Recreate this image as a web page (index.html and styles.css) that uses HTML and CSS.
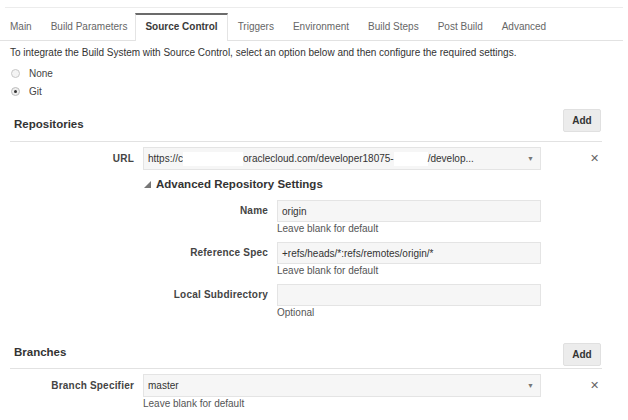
FILE: index.html
```html
<!DOCTYPE html>
<html>
<head>
<meta charset="utf-8">
<link rel="stylesheet" href="styles.css">
</head>
<body>
<div class="page">
  <div class="tabbar">
    <ul class="tabs">
      <li class="tab">Main</li>
      <li class="tab">Build Parameters</li>
      <li class="tab active">Source Control</li>
      <li class="tab">Triggers</li>
      <li class="tab">Environment</li>
      <li class="tab">Build Steps</li>
      <li class="tab">Post Build</li>
      <li class="tab">Advanced</li>
    </ul>
  </div>

  <p class="intro">To integrate the Build System with Source Control, select an option below and then configure the required settings.</p>

  <div class="radios">
    <label class="radio"><span class="dot"></span>None</label>
    <label class="radio"><span class="dot checked"></span>Git</label>
  </div>

  <section class="section repos">
    <div class="sec-head">
      <h2 class="sec-title">Repositories</h2>
      <button class="add">Add</button>
    </div>
    <div class="form-row">
      <span class="label">URL</span>
      <div class="field select">
        <span class="val">https://c<span class="redact w60"></span>oraclecloud.com/developer18075-<span class="redact w34"></span>/develop...</span>
        <span class="caret">&#9660;</span>
      </div>
      <span class="remove">&#10005;</span>
    </div>
    <div class="adv">
      <div class="adv-title"><span class="tri"></span>Advanced Repository Settings</div>
      <div class="adv-row">
        <span class="label">Name</span>
        <div class="stack">
          <div class="field"><span class="val">origin</span></div>
          <div class="hint">Leave blank for default</div>
        </div>
      </div>
      <div class="adv-row">
        <span class="label">Reference Spec</span>
        <div class="stack">
          <div class="field"><span class="val">+refs/heads/*:refs/remotes/origin/*</span></div>
          <div class="hint">Leave blank for default</div>
        </div>
      </div>
      <div class="adv-row">
        <span class="label">Local Subdirectory</span>
        <div class="stack">
          <div class="field"><span class="val"></span></div>
          <div class="hint">Optional</div>
        </div>
      </div>
    </div>
  </section>

  <section class="section branches">
    <div class="sec-head">
      <h2 class="sec-title">Branches</h2>
      <button class="add">Add</button>
    </div>
    <div class="form-row">
      <span class="label">Branch Specifier</span>
      <div class="stack">
        <div class="field select">
          <span class="val">master</span>
          <span class="caret">&#9660;</span>
        </div>
        <div class="hint">Leave blank for default</div>
      </div>
      <span class="remove">&#10005;</span>
    </div>
  </section>
</div>
</body>
</html>
```

FILE: styles.css
```css
* { box-sizing: border-box; }
html, body { margin: 0; padding: 0; background: #fff; }
body {
  font-family: "Liberation Sans", Arial, sans-serif;
  font-size: 10px;
  color: #333;
  width: 628px;
  height: 420px;
  overflow: hidden;
}
.page { padding-top: 7px; }

.tabbar {
  margin: 0 5px;
  border-top: 1px solid #ececec;
  padding-top: 5px;
}
.tabs {
  list-style: none;
  margin: 0 0 0 -5px;
  padding: 0;
  display: flex;
  border-bottom: 1px solid #e2e2e2;
  width: 623px;
}
.tab {
  height: 27px;
  line-height: 27px;
  padding: 0 9px 0 10px;
  color: #666;
  white-space: nowrap;
}
.tab.active {
  border-top: 2px solid #6b6b6b;
  border-left: 1px solid #e4e4e4;
  border-right: 1px solid #e4e4e4;
  background: #fff;
  margin-bottom: -1px;
  margin-left: -1px;
  height: 28px;
  line-height: 24px;
  font-weight: bold;
  color: #3a3a3a;
  padding: 0 9px;
}

.intro {
  margin: 4px 0 0 10px;
  line-height: 16px;
}

.radios { margin: 3px 0 0 11px; display: flex; flex-direction: column; }
.radio {
  height: 18px;
  display: flex;
  align-items: center;
  gap: 9px;
  color: #444;
}
.dot {
  width: 9px; height: 9px;
  border-radius: 50%;
  border: 1px solid #c8c8c8;
  background: #f4f4f4;
  position: relative;
}
.dot.checked { border-color: #bdbdbd; background: #eee; }
.dot.checked::after {
  content: "";
  position: absolute;
  left: 2px; top: 2px;
  width: 3px; height: 3px;
  border-radius: 50%;
  background: #333;
}

.section { margin: 0 26px 0 10px; }
.repos { margin-top: 9px; }
.branches { margin-top: 23px; }

.sec-head {
  display: flex;
  justify-content: space-between;
  align-items: flex-start;
  padding-left: 4px;
  border-bottom: 1px solid #e2e2e2;
}
.repos .sec-head { height: 33px; }
.branches .sec-head { height: 26px; }
.sec-title {
  margin: 0;
  font-size: 11.5px;
  font-weight: bold;
  color: #333;
  line-height: 15px;
}
.repos .sec-title { padding-top: 8px; }
.branches .sec-title { padding-top: 2px; }
.add {
  font-family: inherit;
  font-size: 10px;
  font-weight: bold;
  color: #333;
  width: 38px;
  height: 23px;
  padding: 0;
  margin-right: 1px;
  background: #ececec;
  border: 1px solid #e0e0e0;
  border-radius: 2px;
}

.form-row {
  display: grid;
  grid-template-columns: 124px 398px 1fr;
  column-gap: 9px;
  align-items: start;
  margin-top: 5px;
}
.label {
  text-align: right;
  font-weight: bold;
  color: #444;
  letter-spacing: 0.2px;
  line-height: 22px;
  white-space: nowrap;
}
.form-row > .label { line-height: 23px; }
.field {
  height: 22px;
  background: #f6f6f6;
  border: 1px solid #e4e4e4;
  display: flex;
  align-items: center;
  padding: 0 4px;
  color: #333;
}
.form-row .field { height: 23px; }
.select { justify-content: space-between; padding-right: 6px; }
.val { white-space: nowrap; }
.redact { display: inline-block; height: 14px; background: #fff; vertical-align: middle; }
.w60 { width: 60px; }
.w34 { width: 34px; }
.caret { font-size: 7px; color: #777; }
.remove {
  justify-self: end;
  margin-right: 3px;
  line-height: 23px;
  color: #666;
  font-size: 11px;
}
.hint { line-height: 14px; color: #555; }

.adv { margin-left: 133px; width: 398px; }
.adv-title {
  margin-top: 6px;
  line-height: 16px;
  font-size: 11.5px;
  font-weight: bold;
  color: #333;
  display: flex;
  align-items: center;
  gap: 5px;
}
.tri {
  width: 0; height: 0;
  border-left: 7px solid transparent;
  border-bottom: 7px solid #777;
  margin-left: 1px;
}
.adv-row {
  display: grid;
  grid-template-columns: 125px 264px;
  column-gap: 9px;
  margin-top: 6px;
}
.adv-title + .adv-row { margin-top: 8px; }
```
